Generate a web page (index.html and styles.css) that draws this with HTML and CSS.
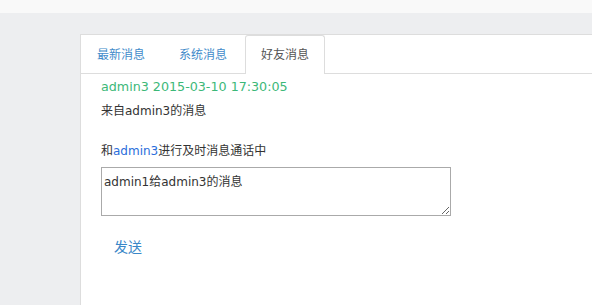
FILE: index.html
```html
<!DOCTYPE html>
<html lang="zh-CN">

<head>
    <meta charset="UTF-8">
    <title>好友消息</title>
    <link rel="stylesheet" href="styles.css">
</head>

<body>
    <div class="topbar"></div>

    <div class="main">
        <div class="panel">
            <!-- Tab -->
            <ul class="tabs">
                <li><a href="#">最新消息</a></li>
                <li><a href="#">系统消息</a></li>
                <li class="active"><a href="#">好友消息</a></li>
            </ul>

            <div class="tab-content">
                <div class="msg-head">admin3 2015-03-10 17:30:05</div>
                <div class="msg-body">来自admin3的消息</div>

                <div class="chat-title">和<span class="chat-user">admin3</span>进行及时消息通话中</div>
                <textarea class="chat-input">admin1给admin3的消息</textarea>

                <a href="#" class="send-link">发送</a>
            </div>
        </div>
    </div>
</body>
</html>
```

FILE: styles.css
```css
body {
    margin: 0;
    padding: 0;
    background: #edeef0;
    font-family: "DejaVu Sans", "Noto Sans CJK SC", sans-serif;
    font-size: 12px;
    color: #333;
}

.topbar {
    height: 13px;
    background: #f9f9f9;
}

.main {
    padding: 21px 0 0 80px;
}

.panel {
    background: #fff;
    border-top: 1px solid #ddd;
    border-left: 1px solid #ddd;
    min-height: 270px;
}

.tabs {
    list-style: none;
    margin: 0;
    padding: 0;
    display: flex;
    height: 38px;
    border-bottom: 1px solid #ddd;
}

.tabs li {
    margin-bottom: -1px;
}

.tabs a {
    display: block;
    height: 37px;
    line-height: 39px;
    padding: 0 15px;
    margin-right: 2px;
    color: #428bca;
    text-decoration: none;
    border: 1px solid transparent;
    border-bottom: none;
    border-radius: 3px 3px 0 0;
}

.tabs .active a {
    color: #555;
    background: #fff;
    border-color: #ddd;
    height: 38px;
}

.tab-content {
    padding: 4px 20px 0;
}

.msg-head {
    color: #3cb878;
    font-size: 12.7px;
    line-height: 18px;
}

.msg-body {
    margin-top: 6px;
    line-height: 18px;
}

.chat-title {
    margin-top: 22px;
    line-height: 18px;
}

.chat-user {
    color: #2a6edb;
}

.chat-input {
    display: block;
    box-sizing: border-box;
    width: 350px;
    height: 49px;
    margin-top: 7px;
    padding: 4px 2px;
    border: 1px solid #aaa;
    font-family: inherit;
    font-size: 12px;
    color: #333;
}

.send-link {
    display: inline-block;
    margin: 20px 0 0 13px;
    font-size: 14px;
    color: #3a87c8;
    text-decoration: none;
}
```
